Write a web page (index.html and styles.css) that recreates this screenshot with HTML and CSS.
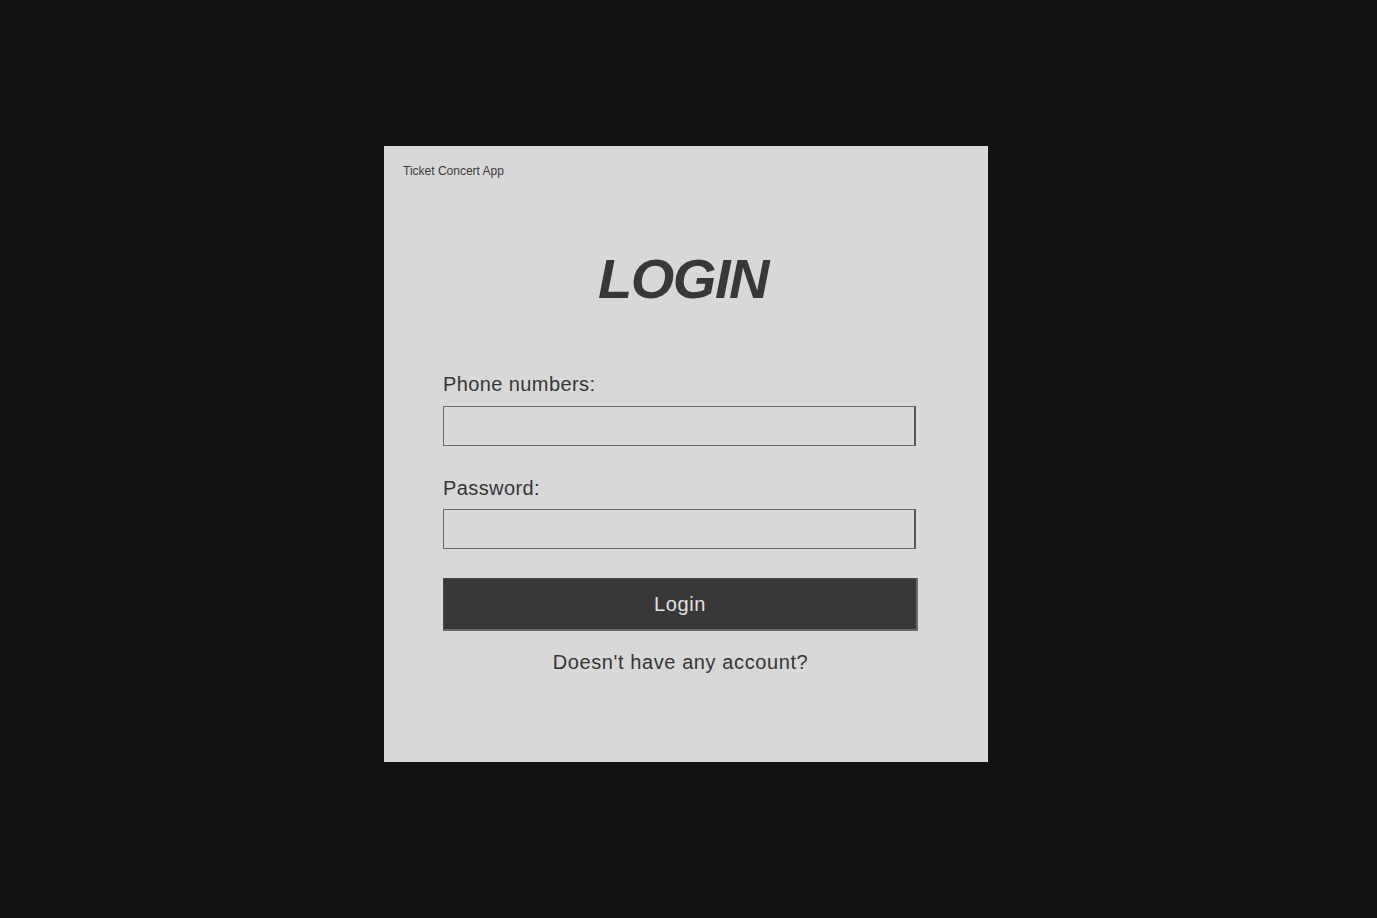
FILE: index.html
```html
<!DOCTYPE html>
<html lang="en">
<head>
<meta charset="utf-8">
<title>Ticket Concert App</title>
<link rel="stylesheet" href="styles.css">
</head>
<body>
<div class="card">
  <div class="app-title">Ticket Concert App</div>
  <h1 class="heading">LOGIN</h1>
  <form class="form">
    <label class="label label-first" for="phone">Phone numbers:</label>
    <input class="input" id="phone" type="text">
    <label class="label label-next" for="pw">Password:</label>
    <input class="input" id="pw" type="password">
    <button class="btn" type="button">Login</button>
    <div class="signup">Doesn't have any account?</div>
  </form>
</div>
</body>
</html>
```
FILE: styles.css
```css
html, body {
  margin: 0;
  background: #111111;
  height: 100%;
}
body {
  padding: 146px 0 0 384px;
  box-sizing: border-box;
  font-family: "Liberation Sans", Arial, sans-serif;
  color: #363636;
}
.card {
  width: 604px;
  height: 616px;
  background: #d8d8d8;
  padding-top: 18px;
  box-sizing: border-box;
}
.app-title {
  margin-left: 19px;
  font-size: 12px;
  line-height: 14px;
  color: #3a3a3a;
}
.heading {
  margin: 73px 0 0;
  height: 56px;
  text-align: center;
  font-size: 56px;
  line-height: 56px;
  font-weight: bold;
  font-style: italic;
  letter-spacing: -1.5px;
  color: #383838;
  padding-right: 6px;
}
.form {
  display: flex;
  flex-direction: column;
  padding: 0 70px 0 59px;
  margin: 0;
}
.label {
  display: block;
  font-size: 20px;
  line-height: 20px;
  letter-spacing: 0.4px;
  color: #363636;
}
.label-first { margin-top: 67px; }
.label-next { margin-top: 32px; }
.input {
  width: 473px;
  height: 40px;
  box-sizing: border-box;
  margin: 12px 0 0;
  background: #d8d8d8;
  border: 1px solid #6a6a6a;
  border-right: 2px solid #555555;
  padding: 0 8px;
  font-size: 16px;
  outline: none;
}
#pw { margin-top: 11px; }
.btn {
  width: 475px;
  height: 53px;
  margin-top: 29px;
  box-sizing: border-box;
  background: #383838;
  color: #e2e2e2;
  border: 1px solid #4a4a4a;
  border-right: 2px solid #6a6a6a;
  border-bottom: 2px solid #6a6a6a;
  font-family: "Liberation Sans", Arial, sans-serif;
  font-size: 20px;
  letter-spacing: 0.6px;
  padding: 0;
  cursor: pointer;
}
.signup {
  margin-top: 21px;
  width: 475px;
  text-align: center;
  font-size: 20px;
  line-height: 20px;
  letter-spacing: 0.6px;
  color: #363636;
}
```
